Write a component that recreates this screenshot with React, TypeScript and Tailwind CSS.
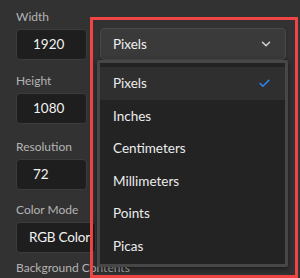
import { Check, ChevronDown } from "lucide-react";

const units = ["Pixels", "Inches", "Centimeters", "Millimeters", "Points", "Picas"];

function Field({ label, value, className = "" }: { label: string; value: string; className?: string }) {
  return (
    <div className={className}>
      <div className="text-[12px] leading-[18px] text-[#b4b4b4]">{label}</div>
      <div className="mt-[3px] h-[31px] w-[71px] rounded-[4px] border border-[#3c3c3c] bg-[#1e1e1e] pl-[16px] text-[13.5px] leading-[29px] text-[#f2f2f2]">
        {value}
      </div>
    </div>
  );
}

export default function App() {
  return (
    <div className="relative h-[278px] w-[300px] overflow-hidden bg-[#323232] font-['Lato',sans-serif]">
      {/* left column */}
      <div className="flex flex-col pl-[16px] pt-[8px]">
        <Field label="Width" value="1920" />
        <Field label="Height" value="1080" className="mt-[12px]" />
        <Field label="Resolution" value="72" className="mt-[14px]" />
        <div className="mt-[11px]">
          <div className="text-[12px] leading-[18px] text-[#b4b4b4]">Color Mode</div>
          <div className="mt-[3px] h-[31px] w-[80px] rounded-[4px] border border-[#3c3c3c] bg-[#1e1e1e] pl-[12px] text-[13.5px] leading-[29px] tracking-[-0.2px] text-[#f2f2f2]">
            RGB Color
          </div>
        </div>
        <div className="mt-[6px] text-[12px] leading-[18px] text-[#b4b4b4]">Background Contents</div>
      </div>

      {/* highlighted dropdown */}
      <div className="absolute left-[90px] top-[17px] h-[261px] w-[208px] border-[3px] border-[#f04545]">
        <div className="ml-[7px] mt-[8px] flex h-[32px] w-[186px] items-center justify-between rounded-[4px] border border-[#4a4a4a] bg-[#3a3a3a] pl-[12px] pr-[12px] text-[13.5px] text-[#f0f0f0] shadow-[0_1px_2px_rgba(0,0,0,0.4)]">
          <span>Pixels</span>
          <ChevronDown size={14} strokeWidth={2.75} className="text-[#cfcfcf]" />
        </div>
        <div className="ml-[4px] w-[191px] rounded-[2px] border-[3px] border-[#474747] bg-[#232323] pb-[2px] pt-[4px] shadow-[0_2px_6px_rgba(0,0,0,0.5)]">
          {units.map((u, i) => (
            <div
              key={u}
              className={`flex h-[32.5px] items-center justify-between pl-[13px] pr-[14px] text-[13.5px] text-[#ececec] ${i === 0 ? "bg-[#2f2f2f]" : ""}`}
            >
              <span>{u}</span>
              {i === 0 && <Check size={13} strokeWidth={3} className="text-[#2d86f0]" />}
            </div>
          ))}
        </div>
      </div>
    </div>
  );
}
